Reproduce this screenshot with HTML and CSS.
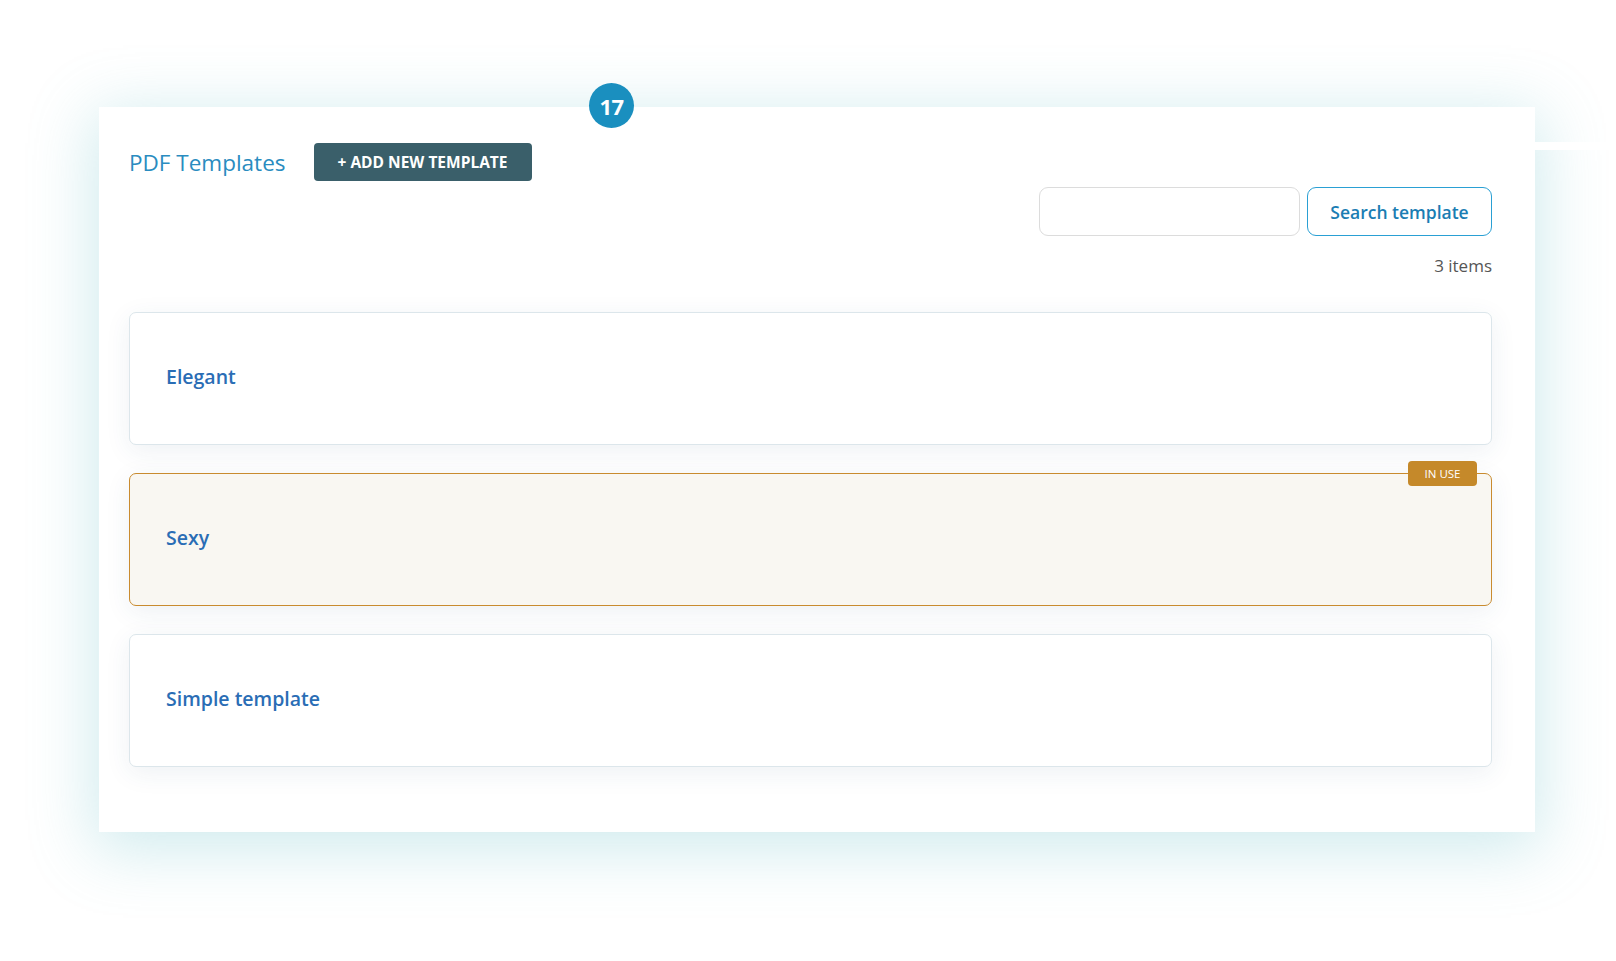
FILE: index.html
```html
<!DOCTYPE html>
<html lang="en">
<head>
<meta charset="utf-8">
<title>PDF Templates</title>
<link rel="stylesheet" href="styles.css">
</head>
<body>
<div class="stage">
  <section class="panel">
    <span class="step-badge">17</span>
    <header class="panel-head">
      <h1 class="panel-title">PDF Templates</h1>
      <button class="btn-add" type="button">+ ADD NEW TEMPLATE</button>
    </header>
    <div class="search-row">
      <input class="search-input" type="text" aria-label="Search">
      <button class="btn-search" type="button">Search template</button>
    </div>
    <div class="count">3 items</div>
    <ul class="template-list">
      <li class="template-card"><span class="template-name">Elegant</span></li>
      <li class="template-card in-use"><span class="template-name">Sexy</span><span class="tag-in-use">IN USE</span></li>
      <li class="template-card"><span class="template-name">Simple template</span></li>
    </ul>
  </section>
  <div class="edge-strip"></div>
</div>
</body>
</html>
```

FILE: styles.css
```css
* { box-sizing: border-box; }

html, body {
  margin: 0;
  padding: 0;
  background: #ffffff;
  font-family: "Open Sans", "Noto Sans", "Liberation Sans", sans-serif;
}

.stage {
  position: relative;
  width: 1616px;
  height: 961px;
  padding: 107px 0 0 99px;
  overflow: hidden;
}

.panel {
  position: relative;
  width: 1436px;
  height: 725px;
  background: #ffffff;
  padding: 36px 43px 65px 30px;
  box-shadow: 0 12px 60px 6px rgba(100, 188, 200, 0.3);
  z-index: 1;
}

.step-badge {
  position: absolute;
  top: -24px;
  left: 490px;
  width: 45px;
  height: 45px;
  border-radius: 50%;
  background: #1a8fbf;
  color: #ffffff;
  font-weight: 700;
  font-size: 22px;
  display: flex;
  align-items: center;
  justify-content: center;
  letter-spacing: -0.5px;
}

.panel-head {
  display: flex;
  align-items: center;
  gap: 28px;
  height: 38px;
}

.panel-title {
  margin: 0;
  font-size: 22.5px;
  font-weight: 400;
  color: #2a8cc0;
  line-height: 1;
  padding-top: 2px;
}

.btn-add {
  height: 38px;
  width: 218px;
  border: none;
  border-radius: 4px;
  background: #3a5f6a;
  color: #ffffff;
  font-family: inherit;
  font-weight: 700;
  font-size: 15.5px;
  letter-spacing: 0;
  padding: 0;
}

.search-row {
  display: flex;
  justify-content: flex-end;
  gap: 7px;
  margin-top: 6px;
  height: 49px;
}

.search-input {
  width: 261px;
  height: 49px;
  border: 1px solid #dcdcdc;
  border-radius: 9px;
  background: #ffffff;
  outline: none;
}

.btn-search {
  width: 185px;
  height: 49px;
  border: 1.5px solid #2aa0d4;
  border-radius: 9px;
  background: #ffffff;
  color: #1a7db3;
  font-family: inherit;
  font-weight: 600;
  font-size: 17.5px;
  padding: 0;
}

.count {
  margin-top: 18px;
  height: 24px;
  line-height: 24px;
  text-align: right;
  color: #555555;
  font-size: 17px;
}

.template-list {
  list-style: none;
  margin: 34px 0 0 0;
  padding: 0;
  display: flex;
  flex-direction: column;
  gap: 28px;
}

.template-card {
  position: relative;
  height: 133px;
  border: 1.5px solid #dce6eb;
  border-radius: 7px;
  background: #ffffff;
  display: flex;
  align-items: center;
  padding-left: 36px;
  padding-bottom: 4px;
  box-shadow: 0 6px 26px rgba(40, 80, 110, 0.08);
}

.template-card.in-use {
  background: #f9f7f2;
  border-color: #c98b2f;
}

.template-name {
  color: #2a6db5;
  font-weight: 600;
  font-size: 19.5px;
}

.tag-in-use {
  position: absolute;
  top: -13px;
  right: 14px;
  width: 69px;
  height: 25px;
  border-radius: 4px;
  background: #c5892a;
  color: #ffffff;
  font-size: 11.5px;
  display: flex;
  align-items: center;
  justify-content: center;
}

.edge-strip {
  position: absolute;
  left: 1535px;
  top: 142px;
  width: 81px;
  height: 8px;
  background: #ffffff;
  z-index: 2;
}
```
